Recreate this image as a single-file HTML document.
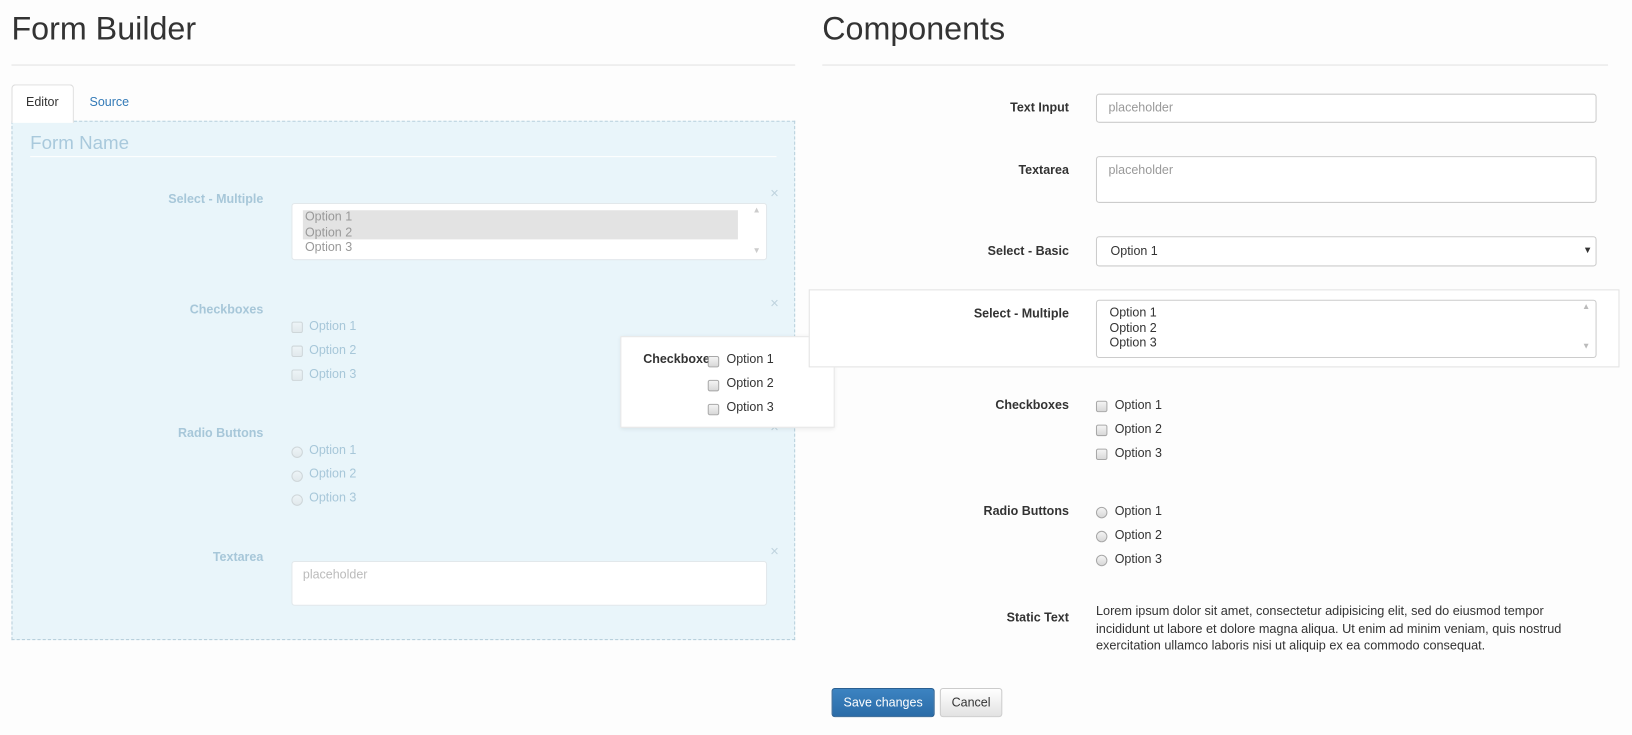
<!DOCTYPE html>
<html><head><meta charset="utf-8"><style>
body{margin:0;width:1632px;height:735px;background:#fdfdfd;font-family:"Liberation Sans",Arial,sans-serif;color:#333;position:relative;overflow:hidden}
#w{position:absolute;left:0;top:0;width:1568px;height:706px;transform:scale(1.0408);transform-origin:0 0}
.a{position:absolute;white-space:nowrap}
h1{position:absolute;margin:0;font-weight:400;font-size:31px;color:#333}
.hr{position:absolute;height:1px;background:#e3e3e3}
.lbl{position:absolute;font-size:12px;font-weight:bold;text-align:right;width:200px}
.fl{color:#a7c7d9}
.t{font-size:12px}
.cb{position:absolute;width:9px;height:9px;border:1px solid #a8a8a8;border-radius:2px;background:linear-gradient(#f4f4f4,#d8d8d8)}
.rd{position:absolute;width:9px;height:9px;border:1px solid #a8a8a8;border-radius:50%;background:linear-gradient(#f4f4f4,#d8d8d8)}
.box{position:absolute;background:#fff;border:1px solid #ccc;border-radius:3px;box-sizing:border-box}
.x{position:absolute;color:#bfd3de;font-size:14px}
</style></head><body><div id="w">
<h1 style="left:11px;top:10px">Form Builder</h1>
<div class="hr" style="left:11px;top:62px;width:753px"></div>
<h1 style="left:790px;top:10px">Components</h1>
<div class="hr" style="left:790px;top:62px;width:755px"></div>

<div class="a" style="left:11px;top:81px;width:58px;height:36px;border:1px solid #ddd;border-bottom:none;border-radius:4px 4px 0 0;background:#fff;z-index:2"></div>
<div class="a t" style="left:25px;top:91px;z-index:3">Editor</div>
<div class="a t" style="left:86px;top:91px;color:#337ab7">Source</div>

<div class="a" style="left:11px;top:116px;width:751px;height:497px;background:#e9f5fa;border:1px dashed #b8d0dc"></div>
<div class="a" style="left:29px;top:127px;font-size:18px;color:#a9c9dc">Form Name</div>
<div class="hr" style="left:29px;top:150px;width:717px;background:#fff"></div>

<div class="lbl fl" style="left:53px;top:184px">Select - Multiple</div>
<div class="box" style="left:280px;top:195px;width:457px;height:55px;border-color:#e2e8eb"></div>
<div class="a" style="left:291px;top:202px;width:418px;height:28px;background:#e3e3e3"></div>
<div class="a t" style="left:293px;top:201px;color:#999;line-height:14.5px">Option 1<br>Option 2<br>Option 3</div>
<div class="a" style="left:723px;top:197px;font-size:8px;color:#ccc">▲</div>
<div class="a" style="left:723px;top:236px;font-size:8px;color:#ccc">▼</div>
<div class="x" style="left:740px;top:177px">×</div>

<div class="lbl fl" style="left:53px;top:290px">Checkboxes</div>
<div class="x" style="left:740px;top:283px">×</div>
<div class="cb" style="left:280px;top:309px;opacity:.4"></div><div class="a t fl" style="left:297px;top:306px">Option 1</div>
<div class="cb" style="left:280px;top:332px;opacity:.4"></div><div class="a t fl" style="left:297px;top:329px">Option 2</div>
<div class="cb" style="left:280px;top:355px;opacity:.4"></div><div class="a t fl" style="left:297px;top:352px">Option 3</div>

<div class="lbl fl" style="left:53px;top:409px">Radio Buttons</div>
<div class="x" style="left:740px;top:402px">×</div>
<div class="rd" style="left:280px;top:429px;opacity:.4"></div><div class="a t fl" style="left:297px;top:425px">Option 1</div>
<div class="rd" style="left:280px;top:452px;opacity:.4"></div><div class="a t fl" style="left:297px;top:448px">Option 2</div>
<div class="rd" style="left:280px;top:475px;opacity:.4"></div><div class="a t fl" style="left:297px;top:471px">Option 3</div>

<div class="lbl fl" style="left:53px;top:528px">Textarea</div>
<div class="x" style="left:740px;top:521px">×</div>
<div class="box" style="left:280px;top:539px;width:457px;height:43px;border-color:#e2e8eb"></div>
<div class="a t" style="left:291px;top:545px;color:#bbb">placeholder</div>

<div class="a" style="left:596px;top:323px;width:204px;height:86px;background:#fff;border:1px solid #e6e6e6;box-shadow:0 1px 4px rgba(0,0,0,.08)"></div>
<div class="a t" style="left:618px;top:338px;font-weight:bold;width:64px;overflow:hidden">Checkboxes</div>
<div class="cb" style="left:680px;top:342px"></div><div class="a t" style="left:698px;top:338px">Option 1</div>
<div class="cb" style="left:680px;top:365px"></div><div class="a t" style="left:698px;top:361px">Option 2</div>
<div class="cb" style="left:680px;top:388px"></div><div class="a t" style="left:698px;top:384px">Option 3</div>

<div class="lbl" style="left:827px;top:96px">Text Input</div>
<div class="box" style="left:1053px;top:90px;width:481px;height:28px"></div>
<div class="a t" style="left:1065px;top:96px;color:#999">placeholder</div>

<div class="lbl" style="left:827px;top:156px">Textarea</div>
<div class="box" style="left:1053px;top:150px;width:481px;height:45px"></div>
<div class="a t" style="left:1065px;top:156px;color:#999">placeholder</div>

<div class="lbl" style="left:827px;top:234px">Select - Basic</div>
<div class="box" style="left:1053px;top:227px;width:481px;height:29px"></div>
<div class="a t" style="left:1067px;top:234px">Option 1</div>
<div class="a" style="left:1521px;top:235px;font-size:9px">▼</div>

<div class="a" style="left:777px;top:278px;width:779px;height:75px;border:1px solid #e3e3e3;box-sizing:border-box;background:#fff"></div>
<div class="lbl" style="left:827px;top:294px">Select - Multiple</div>
<div class="box" style="left:1053px;top:288px;width:481px;height:56px"></div>
<div class="a t" style="left:1066px;top:293px;line-height:14.5px">Option 1<br>Option 2<br>Option 3</div>
<div class="a" style="left:1520px;top:290px;font-size:8px;color:#bbb">▲</div>
<div class="a" style="left:1520px;top:328px;font-size:8px;color:#bbb">▼</div>

<div class="lbl" style="left:827px;top:382px">Checkboxes</div>
<div class="cb" style="left:1053px;top:385px"></div><div class="a t" style="left:1071px;top:382px">Option 1</div>
<div class="cb" style="left:1053px;top:408px"></div><div class="a t" style="left:1071px;top:405px">Option 2</div>
<div class="cb" style="left:1053px;top:431px"></div><div class="a t" style="left:1071px;top:428px">Option 3</div>

<div class="lbl" style="left:827px;top:484px">Radio Buttons</div>
<div class="rd" style="left:1053px;top:487px"></div><div class="a t" style="left:1071px;top:484px">Option 1</div>
<div class="rd" style="left:1053px;top:510px"></div><div class="a t" style="left:1071px;top:507px">Option 2</div>
<div class="rd" style="left:1053px;top:533px"></div><div class="a t" style="left:1071px;top:530px">Option 3</div>

<div class="lbl" style="left:827px;top:586px">Static Text</div>
<div class="a" style="left:1053px;top:579px;font-size:12.2px;line-height:16.5px">Lorem ipsum dolor sit amet, consectetur adipisicing elit, sed do eiusmod tempor<br>incididunt ut labore et dolore magna aliqua. Ut enim ad minim veniam, quis nostrud<br>exercitation ullamco laboris nisi ut aliquip ex ea commodo consequat.</div>

<div class="a" style="left:799px;top:661px;width:99px;height:28px;background:linear-gradient(#3c83c1,#2b6ca8);border:1px solid #2a5f91;box-sizing:border-box;border-radius:3px;color:#fff;font-size:12px;text-align:center;line-height:26px">Save changes</div>
<div class="a" style="left:903px;top:661px;width:60px;height:28px;background:linear-gradient(#fff,#e2e2e2);border:1px solid #ccc;box-sizing:border-box;border-radius:3px;font-size:12px;text-align:center;line-height:26px">Cancel</div>
</div></body></html>
